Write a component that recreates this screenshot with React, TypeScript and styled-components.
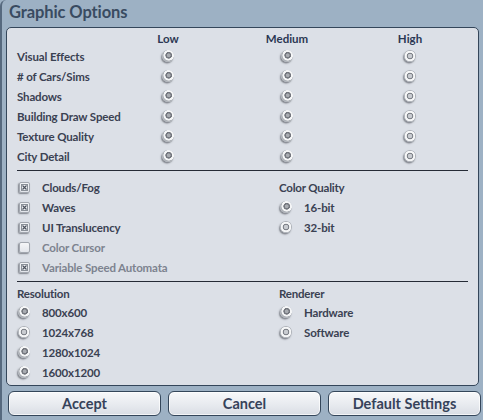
import React from "react";
import styled, { createGlobalStyle, css } from "styled-components";

const Global = createGlobalStyle`
  html, body {
    margin: 0;
    padding: 0;
    background: #9db1c4;
  }
  body {
    font-family: Lato, "Open Sans", "Liberation Sans", sans-serif;
  }
`;

const Window = styled.div`
  box-sizing: border-box;
  width: 483px;
  height: 420px;
  display: flex;
  flex-direction: column;
  padding: 0 4px 4px 4px;
  background: #9db1c4;
  border-left: 2px solid #56697e;
  border-top-left-radius: 6px;
  overflow: hidden;
`;

const Title = styled.h1`
  margin: 0;
  height: 27px;
  padding-left: 3px;
  font-size: 16.5px;
  line-height: 24px;
  font-weight: 700;
  color: #394b61;
  letter-spacing: -0.1px;
`;

const Panel = styled.div`
  flex: 1;
  box-sizing: border-box;
  display: flex;
  flex-direction: column;
  padding: 3px 10px 3px 10px;
  background: #dce0e7;
  border: 1px solid #34465a;
  border-radius: 5px;
`;

const QualityGrid = styled.div`
  display: grid;
  grid-template-columns: 120px 62px 176px 70px;
  grid-template-rows: 15px repeat(6, 20px);
  align-items: center;
`;

const ColumnHead = styled.div`
  justify-self: center;
  font-size: 11.5px;
  font-weight: 700;
  color: #2b3753;
  line-height: 15px;
`;

const Label = styled.span<{ $disabled?: boolean }>`
  font-size: 11.5px;
  font-weight: 700;
  letter-spacing: -0.15px;
  color: ${(p) => (p.$disabled ? "#7d838f" : "#3a4152")};
  white-space: nowrap;
`;

const Cell = styled.div`
  justify-self: center;
  display: flex;
`;

const Divider = styled.hr`
  margin: 4px 0 0 0;
  border: 0;
  height: 1px;
  background: #262b36;
`;

const TwoColumns = styled.div<{ $top: number }>`
  display: grid;
  grid-template-columns: 262px 1fr;
  margin-top: ${(p) => p.$top}px;
`;

const Column = styled.div`
  display: flex;
  flex-direction: column;
`;

const Row = styled.div`
  height: 20px;
  display: flex;
  align-items: center;
  gap: 12px;
  padding-left: 1px;
`;

const CheckRow = styled(Row)`
  gap: 12px;
  padding-left: 2px;
`;

const GroupHead = styled.div<{ $h: number }>`
  height: ${(p) => p.$h}px;
  display: flex;
  align-items: center;
  font-size: 11.5px;
  font-weight: 700;
  letter-spacing: -0.2px;
  color: #3a4152;
`;

const Radio = styled.span<{ $on?: boolean }>`
  flex: none;
  width: 12px;
  height: 12px;
  border-radius: 50%;
  box-shadow: -1px 1.5px 1.5px rgba(40, 44, 52, 0.5);
  ${(p) =>
    p.$on
      ? css`
          background: radial-gradient(
            circle at 50% 50%,
            #c9ccd1 0 2px,
            #80848b 2.4px 3.1px,
            #f5f6f7 3.6px 5px,
            #aeb2b8 5.5px 100%
          );
        `
      : css`
          background: radial-gradient(
            circle at 56% 44%,
            #a9acb1 0 1.6px,
            #74777e 2.1px 3.1px,
            #f5f6f7 3.6px 5px,
            #aeb2b8 5.5px 100%
          );
        `}
`;

const Box = styled.span`
  flex: none;
  width: 11px;
  height: 11px;
  box-sizing: border-box;
  border-radius: 2px;
  border: 1px solid #a2a7af;
  background: linear-gradient(#f5f6f8, #e2e5ea);
  box-shadow: -1px 1px 1.5px rgba(40, 44, 52, 0.5);
  display: flex;
  align-items: center;
  justify-content: center;
`;

const Cross = () => (
  <svg width="7" height="7" viewBox="0 0 7 7">
    <rect x="0.5" y="0.5" width="6" height="6" fill="none" stroke="#8a9098" strokeWidth="1" />
    <path d="M1.5 1.5 L5.5 5.5 M5.5 1.5 L1.5 5.5" stroke="#4c525c" strokeWidth="1.1" />
  </svg>
);

const Check = ({ on }: { on: boolean }) => <Box>{on && <Cross />}</Box>;

const ButtonBar = styled.div`
  display: grid;
  grid-template-columns: repeat(3, 153px);
  gap: 7px;
  margin-top: 5px;
  padding-left: 2px;
`;

const Button = styled.button`
  height: 25px;
  box-sizing: border-box;
  border: 1px solid #34465a;
  border-radius: 6px;
  background: linear-gradient(#f7f8fa, #e6e9ee 60%, #d9dde4);
  box-shadow: inset 0 0 0 1px rgba(255, 255, 255, 0.7);
  font-family: inherit;
  font-size: 14.5px;
  font-weight: 700;
  color: #36425a;
  padding: 0;
  cursor: pointer;
`;

const settings = [
  { name: "Visual Effects", level: 2 },
  { name: "# of Cars/Sims", level: 2 },
  { name: "Shadows", level: 2 },
  { name: "Building Draw Speed", level: 2 },
  { name: "Texture Quality", level: 2 },
  { name: "City Detail", level: 2 },
];

const toggles = [
  { name: "Clouds/Fog", on: true, disabled: false },
  { name: "Waves", on: true, disabled: false },
  { name: "UI Translucency", on: true, disabled: false },
  { name: "Color Cursor", on: false, disabled: true },
  { name: "Variable Speed Automata", on: true, disabled: true },
];

const resolutions = ["800x600", "1024x768", "1280x1024", "1600x1200"];

export default function App() {
  return (
    <>
      <Global />
      <Window>
        <Title>Graphic Options</Title>
        <Panel>
          <QualityGrid>
            <span />
            <ColumnHead>Low</ColumnHead>
            <ColumnHead>Medium</ColumnHead>
            <ColumnHead>High</ColumnHead>
            {settings.map((s) => (
              <React.Fragment key={s.name}>
                <Label>{s.name}</Label>
                {[0, 1, 2].map((i) => (
                  <Cell key={i}>
                    <Radio $on={s.level === i} />
                  </Cell>
                ))}
              </React.Fragment>
            ))}
          </QualityGrid>
          <Divider />
          <TwoColumns $top={6}>
            <Column>
              {toggles.map((t) => (
                <CheckRow key={t.name}>
                  <Check on={t.on} />
                  <Label $disabled={t.disabled}>{t.name}</Label>
                </CheckRow>
              ))}
            </Column>
            <Column>
              <GroupHead $h={20}>Color Quality</GroupHead>
              <Row>
                <Radio />
                <Label>16-bit</Label>
              </Row>
              <Row>
                <Radio $on />
                <Label>32-bit</Label>
              </Row>
            </Column>
          </TwoColumns>
          <Divider />
          <TwoColumns $top={3}>
            <Column>
              <GroupHead $h={17}>Resolution</GroupHead>
              {resolutions.map((r) => (
                <Row key={r}>
                  <Radio $on={r === "1024x768"} />
                  <Label>{r}</Label>
                </Row>
              ))}
            </Column>
            <Column>
              <GroupHead $h={17}>Renderer</GroupHead>
              <Row>
                <Radio />
                <Label>Hardware</Label>
              </Row>
              <Row>
                <Radio $on />
                <Label>Software</Label>
              </Row>
            </Column>
          </TwoColumns>
        </Panel>
        <ButtonBar>
          <Button>Accept</Button>
          <Button>Cancel</Button>
          <Button>Default Settings</Button>
        </ButtonBar>
      </Window>
    </>
  );
}
